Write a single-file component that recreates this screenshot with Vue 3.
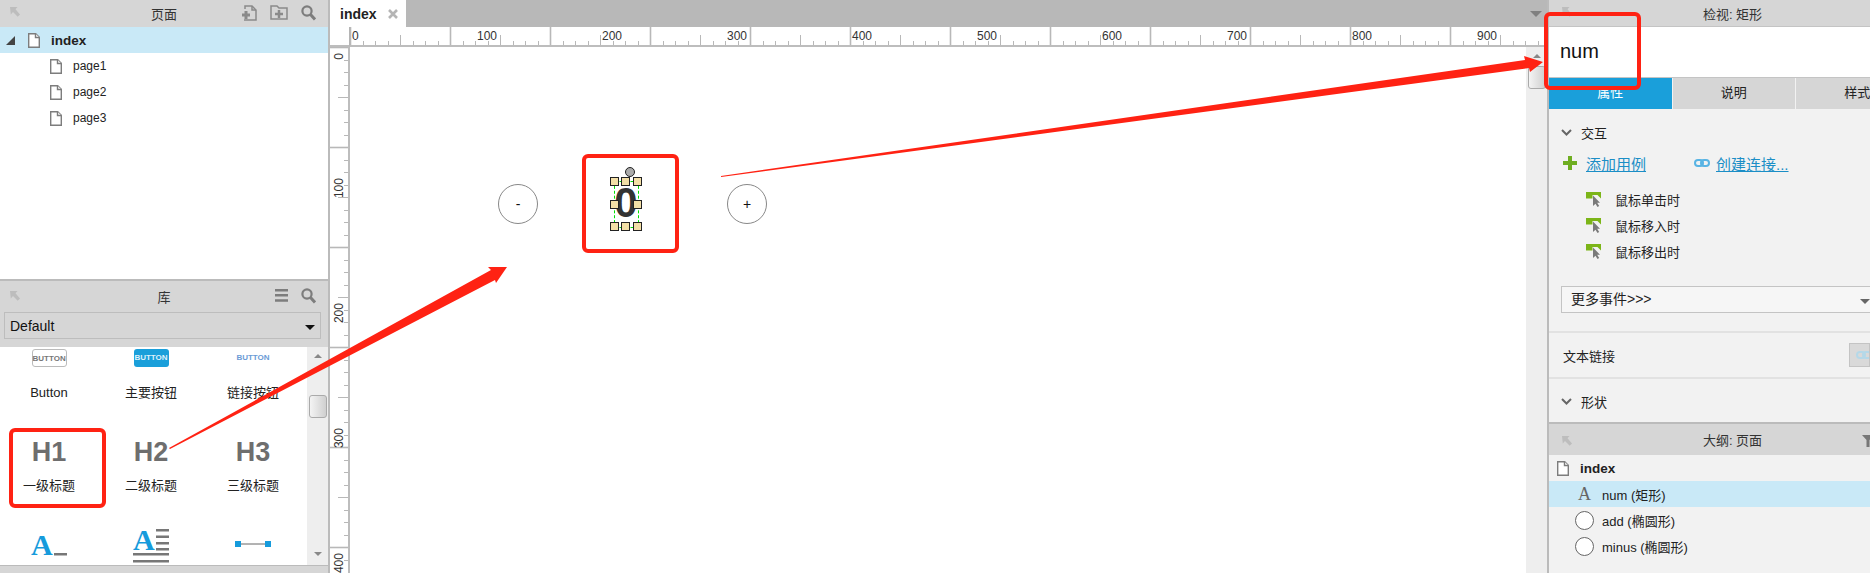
<template>
  <div class="app">
    <aside class="left">
      <section class="pages">
        <header class="bar">
          <svg class="pin" viewBox="0 0 10 10"><path d="M0 0h7.500L5.500 2.200 10 7.500 7.700 9.800 3 5 .8 7.500z" /></svg>
          <span class="bar__title">页面</span>
          <div class="bar__tools">
            <svg width="16" height="16" viewBox="0 0 16 16" fill="none" stroke="#8a8a8a" stroke-width="1.5"><path d="M4 4V1h7l4 4v10H3" /><path d="M11 1v4h4" /><path d="M1 10h8M5 6v8" stroke-width="3" /></svg>
            <svg width="18" height="15" viewBox="0 0 18 15" fill="none" stroke="#8a8a8a" stroke-width="1.5"><path d="M1 14V1h6l2 2h8v11z" /><path d="M5 9h8M9 5v8" stroke-width="2.500" /></svg>
            <svg width="15" height="16" viewBox="0 0 15 16" fill="none" stroke="#7d7d7d"><circle cx="6" cy="6" r="4.600" stroke-width="2.200" /><path d="M9.500 9.500l4.500 5" stroke-width="3" /></svg>
          </div>
        </header>
        <div class="tree-row tree-row--on">
          <span class="tree-tri"></span>
          <svg class="file" viewBox="0 0 12 15"><path d="M.7.7h7l3.600 3.600v10H.7z" /><path d="M7.500.7v3.800h3.800" /></svg>
          <b>index</b>
        </div>
        <div v-for="p in pages" :key="p" class="tree-row tree-row--child">
          <svg class="file" viewBox="0 0 12 15"><path d="M.7.7h7l3.600 3.600v10H.7z" /><path d="M7.500.7v3.800h3.800" /></svg>
          <span>{{ p }}</span>
        </div>
      </section>
      <section class="library">
        <div class="lib-top">
          <header class="bar bar--lib">
            <svg class="pin" viewBox="0 0 10 10"><path d="M0 0h7.500L5.500 2.200 10 7.500 7.700 9.800 3 5 .8 7.500z" /></svg>
            <span class="bar__title">库</span>
            <div class="bar__tools">
              <svg width="13" height="13" viewBox="0 0 13 13" fill="#7d7d7d"><path d="M0 0h13v2.400H0zM0 5h13v2.400H0zM0 10.300h13v2.400H0z" /></svg>
              <svg width="15" height="16" viewBox="0 0 15 16" fill="none" stroke="#7d7d7d"><circle cx="6" cy="6" r="4.600" stroke-width="2.200" /><path d="M9.500 9.500l4.500 5" stroke-width="3" /></svg>
            </div>
          </header>
          <div class="lib-select">
            <span>Default</span>
            <i class="caret"></i>
          </div>
        </div>
        <div class="lib-body">
          <div class="lib-grid">
            <div v-for="w in widgets" :key="w.label" class="widget" :class="w.kind === 'btn' ? 'widget--btn' : 'widget--head'">
              <div class="widget__pic">
                <span v-if="w.kind === 'btn'" class="thumb" :class="w.cls">BUTTON</span>
                <span v-else class="head">{{ w.kind }}</span>
              </div>
              <span class="widget__label">{{ w.label }}</span>
            </div>
            <div class="widget">
              <div class="widget__pic widget__pic--icon widget__pic--title">
                <svg width="36" height="36" viewBox="0 -8 36 36"><text x="0" y="20" class="pic-a">A</text><path d="M23 18h13v2.500H23z" fill="#777" /></svg>
              </div>
            </div>
            <div class="widget">
              <div class="widget__pic widget__pic--icon widget__pic--para">
                <svg width="36" height="42" viewBox="0 -6 36 42"><text x="0" y="22" class="pic-a">A</text><path d="M23 1h13v2.500H23zM23 7.500h13V10H23zM23 14h13v2.500H23zM23 20h13v2.500H23zM0 25h36v2.500H0zM0 32h36v2.500H0z" fill="#777" /></svg>
              </div>
            </div>
            <div class="widget">
              <div class="widget__pic widget__pic--icon widget__pic--line">
                <svg width="36" height="8" viewBox="0 0 36 8"><path d="M4 4h28" stroke="#666" /><path d="M0 1h6v6H0zM30 1h6v6h-6z" fill="#169bdc" /></svg>
              </div>
            </div>
          </div>
          <div class="vscroll">
            <i class="vscroll__up"></i>
            <i class="vscroll__thumb"></i>
            <i class="vscroll__down"></i>
          </div>
        </div>
        <div class="lib-foot"></div>
      </section>
    </aside>

    <main class="center">
      <div class="tabs">
        <div class="tab">
          <b>index</b>
          <svg width="10" height="10" viewBox="0 0 10 10" stroke="#b5b5b5" stroke-width="2.600"><path d="M1 1l8 8M9 1l-8 8" /></svg>
        </div>
        <i class="tabs__menu"></i>
      </div>
      <div class="stage">
        <div class="corner"></div>
        <svg class="hruler" width="1197" height="20">
          <path v-for="t in hTicks" :key="t.x" :d="`M${t.x} 19V${t.top}`" :stroke-width="t.w" stroke="#b8b8b8" fill="none" />
          <path d="M0 19H1197" stroke="#bdbdbd" stroke-width="2" />
          <text v-for="l in hLabels" :key="l.v" :x="l.x + 2" y="13" class="rtext">{{ l.v }}</text>
        </svg>
        <svg class="vruler" width="20" height="526">
          <path v-for="t in vTicks" :key="t.y" :d="`M19 ${t.y}H${t.left}`" :stroke-width="t.w" stroke="#b8b8b8" fill="none" />
          <path d="M19 0V526" stroke="#bdbdbd" stroke-width="2" />
          <text v-for="l in vLabels" :key="l.v" :transform="`translate(13 ${l.y + 6 + l.w}) rotate(-90)`" class="rtext">{{ l.v }}</text>
        </svg>
        <div class="canvas">
          <div class="ball ball--minus">-</div>
          <div class="ball ball--plus">+</div>
          <div class="num">0</div>
          <div class="sel"></div>
          <i class="rot"></i>
          <i v-for="h in handles" :key="h.k" class="grip" :style="{ left: h.x + 'px', top: h.y + 'px' }"></i>
          <div class="vscroll vscroll--canvas">
            <i class="vscroll__up"></i>
            <i class="vscroll__thumb"></i>
          </div>
        </div>
      </div>
    </main>

    <aside class="right">
      <header class="bar bar--right">
        <svg class="pin" viewBox="0 0 10 10"><path d="M0 0h7.500L5.500 2.200 10 7.500 7.700 9.800 3 5 .8 7.500z" /></svg>
        <span class="bar__title">检视: 矩形</span>
      </header>
      <div class="name">num</div>
      <div class="rtabs">
        <span class="rtab rtab--on">属性</span>
        <span class="rtab">说明</span>
        <span class="rtab">样式</span>
      </div>
      <div class="props">
        <div class="sec-title">
          <svg width="11" height="7" viewBox="0 0 11 7" fill="none" stroke="#666" stroke-width="2"><path d="M1 1l4.500 4.500L10 1" /></svg>
          <span>交互</span>
        </div>
        <div class="links">
          <svg width="14" height="14" viewBox="0 0 14 14" fill="#6fae21"><path d="M5 0h4v5h5v4H9v5H5V9H0V5h5z" /></svg>
          <a class="lnk">添加用例</a>
          <svg class="chain" width="16" height="8" viewBox="0 0 16 8" fill="none" stroke="#59b4e4" stroke-width="2"><rect x="1" y="1" width="8" height="6" rx="3" /><rect x="7" y="1" width="8" height="6" rx="3" /></svg>
          <a class="lnk lnk--chain">创建连接...</a>
        </div>
        <ul class="events">
          <li v-for="e in events" :key="e">
            <svg width="15" height="15" viewBox="0 0 15 15"><path d="M0 0h15v6.500L11.500 3H6.500v3.500H0z" fill="#7cb518" /><path d="M7 3.500V14l2.500-2.300 2 3.300 1.700-1-2-3.300H14z" fill="#7a7a7a" /></svg>
            <span>{{ e }}</span>
          </li>
        </ul>
        <div class="more">更多事件&gt;&gt;&gt;<i class="caret caret--grey"></i></div>
        <div class="textlink">
          <span>文本链接</span>
          <div class="tl-btn">
            <svg width="16" height="8" viewBox="0 0 16 8" fill="none" stroke="#b5d8e8" stroke-width="2"><rect x="1" y="1" width="8" height="6" rx="3" /><rect x="7" y="1" width="8" height="6" rx="3" /></svg>
          </div>
        </div>
        <div class="sec-title sec-title--shape">
          <svg width="11" height="7" viewBox="0 0 11 7" fill="none" stroke="#666" stroke-width="2"><path d="M1 1l4.500 4.500L10 1" /></svg>
          <span>形状</span>
        </div>
      </div>
      <section class="outline">
        <header class="bar bar--right bar--outline">
          <svg class="pin" viewBox="0 0 10 10"><path d="M0 0h7.500L5.500 2.200 10 7.500 7.700 9.800 3 5 .8 7.500z" /></svg>
          <span class="bar__title">大纲: 页面</span>
          <svg class="filter" width="12" height="12" viewBox="0 0 12 12" fill="#777"><path d="M0 0h12L7.500 5v7h-3V5z" /></svg>
        </header>
        <div class="o-row o-row--page">
          <svg class="file" viewBox="0 0 12 15"><path d="M.7.7h7l3.600 3.600v10H.7z" /><path d="M7.500.7v3.800h3.800" /></svg>
          <b>index</b>
        </div>
        <div class="o-row o-row--on">
          <span class="o-a">A</span>
          <span>num (矩形)</span>
        </div>
        <div v-for="o in outline" :key="o" class="o-row">
          <i class="o-ball"></i>
          <span>{{ o }}</span>
        </div>
      </section>
    </aside>

    <!-- red annotations drawn on top of the screenshot -->
    <svg class="marks" width="1870" height="573" viewBox="0 0 1870 573">
      <g fill="none" stroke="#ff2213" stroke-width="4">
        <rect x="11" y="430" width="93" height="76" rx="4" />
        <rect x="584" y="156" width="93" height="95" rx="4" />
        <rect x="1546" y="14" width="93" height="74" rx="4" />
      </g>
      <path d="M169 448 L491 270 L488 267 L507 267 L496 283 L495 280 L170 449z" fill="#ff2213" />
      <path d="M721 176 L1525 60 L1524 56 L1543 62 L1530 72 L1529 68 L721 177z" fill="#ff2213" />
    </svg>
  </div>
</template>

<script setup>
const pages = ['page1', 'page2', 'page3']
const events = ['鼠标单击时', '鼠标移入时', '鼠标移出时']
const outline = ['add (椭圆形)', 'minus (椭圆形)']

const widgets = [
  { kind: 'btn', cls: 'thumb--plain', label: 'Button' },
  { kind: 'btn', cls: 'thumb--primary', label: '主要按钮' },
  { kind: 'btn', cls: 'thumb--link', label: '链接按钮' },
  { kind: 'H1', label: '一级标题' },
  { kind: 'H2', label: '二级标题' },
  { kind: 'H3', label: '三级标题' },
]

const STEP = 12.5

const tickSize = (i) => (i % 8 === 0 ? 0 : i % 4 === 0 ? 8 : 14)

const hTicks = []
for (let i = 0; i < 96; i++) {
  hTicks.push({ x: Math.round(i * STEP) + 0.5, top: tickSize(i), w: i % 8 === 0 ? 1.6 : 1 })
}
const hLabels = Array.from({ length: 10 }, (_, i) => ({ v: i * 100, x: i * 125 }))

const vTicks = []
for (let i = 0; i < 42; i++) {
  vTicks.push({ y: Math.round(i * STEP) + 0.5, left: tickSize(i), w: i % 8 === 0 ? 1.6 : 1 })
}
const vLabels = [0, 100, 200, 300, 400].map((v, i) => ({
  v,
  y: i * 125,
  w: String(v).length * 6.7,
}))

const handles = []
for (const y of [130, 153, 175]) {
  for (const x of [260, 271, 283]) {
    if (y === 153 && x === 271) continue
    handles.push({ k: `${x}-${y}`, x, y })
  }
}
</script>

<style>
html, body {
  margin: 0;
  background: #fff;
}
</style>

<style scoped>
.app {
  position: relative;
  display: flex;
  width: 1870px;
  height: 573px;
  overflow: hidden;
  font-family: "Liberation Sans", "Noto Sans CJK SC", sans-serif;
  font-size: 13px;
  color: #222;
}

/* shared panel header */
.bar {
  position: relative;
  display: flex;
  align-items: center;
  justify-content: center;
  flex: none;
  height: 27px;
  background: #d6d6d6;
}
.bar__title {
  font-size: 13px;
  color: #333;
}
.bar__tools {
  position: absolute;
  right: 12px;
  top: -1px;
  height: 100%;
  display: flex;
  align-items: center;
  gap: 13px;
}
.pin {
  position: absolute;
  left: 10px;
  top: 7px;
  width: 10px;
  height: 10px;
  fill: #bdbdbd;
}
.file {
  flex: none;
  width: 12px;
  height: 15px;
  fill: #fff;
  stroke: #7d7d7d;
  stroke-width: 1.4;
}

/* left column */
.left {
  flex: none;
  display: flex;
  flex-direction: column;
  width: 328px;
  border-right: 2px solid #bbb;
}
.pages {
  flex: none;
  height: 279px;
}
.tree-row {
  display: flex;
  align-items: center;
  height: 26px;
  font-size: 12px;
}
.tree-row--on {
  background: #c9e9f7;
  font-size: 13.5px;
  padding-left: 6px;
}
.tree-row--on .file {
  margin-left: 13px;
}
.tree-row--on b {
  margin-left: 11px;
}
.tree-row--child {
  padding-left: 50px;
}
.tree-row--child span {
  margin-left: 11px;
}
.tree-tri {
  width: 0;
  height: 0;
  border-left: 9px solid transparent;
  border-bottom: 9px solid #444;
}
.library {
  flex: 1;
  display: flex;
  flex-direction: column;
  min-height: 0;
  border-top: 2px solid #bbb;
}
.lib-top {
  flex: none;
  padding-bottom: 8px;
  background: #d6d6d6;
}
.bar--lib {
  height: 31px;
}
.bar--lib .pin {
  top: 10px;
}
.lib-select {
  display: flex;
  align-items: center;
  justify-content: space-between;
  height: 27px;
  padding: 0 5px 0 5px;
  border: 1px solid #bdbdbd;
  margin: 0 7px 0 4px;
  box-sizing: border-box;
  font-size: 14px;
  color: #111;
}
.caret {
  width: 0;
  height: 0;
  margin-top: 3px;
  border: 5px solid transparent;
  border-bottom: 0;
  border-top: 5px solid #111;
}
.lib-body {
  flex: 1;
  display: flex;
  min-height: 0;
}
.lib-grid {
  flex: 1;
  display: grid;
  grid-template-columns: repeat(3, 102px);
  grid-auto-rows: 94px;
  margin-left: -2px;
  overflow: hidden;
}
.widget {
  display: flex;
  flex-direction: column;
  align-items: center;
  min-width: 0;
}
.widget__pic {
  display: flex;
  align-items: center;
  justify-content: center;
  height: 22px;
}
.widget--head .widget__pic {
  height: 30px;
  margin-top: -4px;
}
.widget__pic--icon {
  align-items: flex-start;
  height: auto;
}
.widget__pic--title {
  margin-top: -8px;
}
.widget__pic--para {
  margin-top: -13px;
}
.widget__pic--line {
  margin-top: 5px;
}
.widget__label {
  margin-top: 15px;
  font-size: 13px;
  line-height: 18px;
  color: #222;
}
.widget--head .widget__label {
  margin-top: 10px;
}
.thumb {
  display: block;
  box-sizing: border-box;
  width: 35px;
  height: 18px;
  border-radius: 3px;
  font-size: 8px;
  font-weight: 700;
  line-height: 17px;
  text-align: center;
  white-space: nowrap;
}
.thumb--plain {
  border: 1px solid #bbb;
  color: #777;
}
.thumb--primary {
  background: #1a9fda;
  color: #dff1fa;
}
.thumb--link {
  color: #6b9bd6;
}
.head {
  font-size: 27px;
  font-weight: 700;
  line-height: 30px;
  color: #6e6e6e;
}
.pic-a {
  font-family: "Liberation Serif", serif;
  font-size: 30px;
  font-weight: 700;
  fill: #169bdc;
}
.lib-foot {
  flex: none;
  height: 8px;
  background: #d6d6d6;
  border-top: 1px solid #bbb;
  box-sizing: border-box;
}

/* scrollbars */
.vscroll {
  position: relative;
  flex: none;
  width: 21px;
  background: #eee;
}
.vscroll__up,
.vscroll__down {
  position: absolute;
  left: 7px;
  width: 0;
  height: 0;
  border: 4px solid transparent;
}
.vscroll__up {
  top: 7px;
  border-top: 0;
  border-bottom: 4px solid #888;
}
.vscroll__down {
  bottom: 9px;
  border-bottom: 0;
  border-top: 4px solid #888;
}
.vscroll__thumb {
  position: absolute;
  left: 2px;
  top: 48px;
  width: 18px;
  height: 23px;
  box-sizing: border-box;
  border: 1px solid #aaa;
  border-radius: 3px;
  background: linear-gradient(90deg, #f4f4f4, #cfcfcf);
}

/* canvas column */
.center {
  flex: 1;
  display: flex;
  flex-direction: column;
  min-width: 0;
}
.tabs {
  position: relative;
  flex: none;
  display: flex;
  height: 27px;
  background: #b8b8b8;
}
.tab {
  display: flex;
  align-items: center;
  gap: 11px;
  width: 76px;
  padding-left: 10px;
  box-sizing: border-box;
  background: #fff;
  font-size: 14px;
}
.tabs__menu {
  position: absolute;
  right: 5px;
  top: 11px;
  width: 0;
  height: 0;
  border: 6px solid transparent;
  border-bottom: 0;
  border-top: 6px solid #808080;
}
.stage {
  flex: 1;
  display: grid;
  grid-template-columns: 20px 1fr;
  grid-template-rows: 20px 1fr;
  min-height: 0;
}
.corner {
  background: #fff;
  border-right: 1px solid #b4b4b4;
  border-bottom: 2px solid #bdbdbd;
  box-sizing: border-box;
}
.hruler,
.vruler {
  display: block;
  background: #fff;
}
.rtext {
  font-size: 12px;
  fill: #333;
}
.canvas {
  position: relative;
  min-width: 0;
  min-height: 0;
  background: #fff;
}
.vscroll--canvas {
  position: absolute;
  top: 0;
  right: 0;
  bottom: 0;
}
.vscroll--canvas .vscroll__thumb {
  left: 2px;
  top: 19px;
}

/* widgets on the page */
.ball {
  position: absolute;
  top: 137px;
  display: flex;
  align-items: center;
  justify-content: center;
  box-sizing: border-box;
  width: 40px;
  height: 40px;
  border: 1px solid #888;
  border-radius: 50%;
  font-size: 14px;
  color: #111;
}
.ball--minus {
  left: 148px;
}
.ball--plus {
  left: 377px;
}
.num {
  position: absolute;
  left: 246px;
  top: 132px;
  width: 60px;
  height: 48px;
  font-size: 42px;
  font-weight: 700;
  line-height: 48px;
  text-align: center;
  color: #333;
}
.sel {
  position: absolute;
  left: 264px;
  top: 134px;
  width: 23px;
  height: 45px;
  border: 1px dashed #00e000;
}
.rot {
  position: absolute;
  left: 275px;
  top: 120px;
  box-sizing: border-box;
  width: 10px;
  height: 10px;
  border: 1px solid #222;
  border-radius: 50%;
  background: #aaa;
}
.grip {
  position: absolute;
  box-sizing: border-box;
  width: 9px;
  height: 9px;
  border: 1.5px solid #222;
  background: #f3dfa6;
}

/* right column */
.right {
  flex: none;
  display: flex;
  flex-direction: column;
  width: 323px;
  box-sizing: border-box;
  border-left: 2px solid #bbb;
  background: #f2f2f2;
  overflow: hidden;
}
.bar--right {
  border-bottom: 1px solid #c4c4c4;
  box-sizing: border-box;
  padding-left: 46px;
  justify-content: center;
}
.bar--right .pin {
  left: 13px;
}
.name {
  flex: none;
  height: 50px;
  padding-left: 11px;
  box-sizing: border-box;
  background: #fff;
  font-size: 20px;
  line-height: 49px;
  color: #111;
}
.rtabs {
  flex: none;
  display: flex;
  gap: 1px;
  width: 380px;
  height: 32px;
  border-top: 1px solid #c4c4c4;
  box-sizing: border-box;
}
.rtab {
  flex: none;
  width: 122.5px;
  background: #d6d6d6;
  font-size: 13px;
  line-height: 30px;
  text-align: center;
  color: #222;
}
.rtab--on {
  background: #1a9fda;
  color: #fff;
}
.props {
  flex: none;
  height: 313px;
  box-sizing: border-box;
  padding-top: 12px;
}
.sec-title {
  display: flex;
  align-items: center;
  gap: 9px;
  height: 22px;
  padding-left: 12px;
  font-size: 13px;
}
.sec-title--shape {
  height: 44px;
}
.links {
  display: flex;
  align-items: center;
  height: 22px;
  margin-top: 9px;
  padding-left: 14px;
  font-size: 15px;
}
.lnk {
  margin-left: 9px;
  color: #1b8ec6;
  text-decoration: underline;
}
.lnk--chain {
  margin-left: 6px;
}
.chain {
  margin-left: 48px;
}
.events {
  margin: 12px 0 0;
  padding: 0 0 0 37px;
  list-style: none;
}
.events li {
  display: flex;
  align-items: center;
  gap: 14px;
  height: 26px;
  font-size: 13px;
}
.more {
  position: relative;
  box-sizing: border-box;
  width: 320px;
  height: 27px;
  margin: 22px 0 0 12px;
  padding-left: 9px;
  border: 1px solid #c4c4c4;
  background: #f6f6f6;
  font-size: 14px;
  line-height: 24px;
}
.caret--grey {
  position: absolute;
  left: 298px;
  top: 9px;
  border-top-color: #666;
}
.textlink {
  display: flex;
  align-items: center;
  justify-content: space-between;
  height: 48px;
  margin-top: 18px;
  padding: 0 0 0 14px;
  border-top: 2px solid #e2e2e2;
  border-bottom: 2px solid #e2e2e2;
  box-sizing: border-box;
  font-size: 13px;
}
.tl-btn {
  display: flex;
  align-items: center;
  width: 21px;
  height: 24px;
  padding-left: 6px;
  box-sizing: border-box;
  border: 1px solid #c4c4c4;
  background: #d9d9d9;
  overflow: hidden;
}
.tl-btn svg {
  flex: none;
}
.outline {
  flex: 1;
  border-top: 2px solid #bbb;
}
.bar--outline {
  height: 31px;
  border-bottom: 0;
}
.bar--outline .pin {
  top: 12px;
}
.filter {
  position: absolute;
  right: -4px;
  top: 11px;
}
.o-row {
  display: flex;
  align-items: center;
  height: 26px;
  padding-left: 26px;
  gap: 8px;
  font-size: 13px;
}
.o-row--page {
  padding-left: 8px;
  gap: 11px;
  font-size: 13.5px;
}
.o-row--on {
  background: #c9e9f7;
}
.o-a {
  width: 16px;
  margin-left: 3px;
  font-family: "Liberation Serif", serif;
  font-size: 18px;
  color: #666;
}
.o-ball {
  flex: none;
  box-sizing: border-box;
  width: 19px;
  height: 19px;
  border: 1px solid #666;
  border-radius: 50%;
  background: #fff;
}

.marks {
  position: absolute;
  left: 0;
  top: 0;
  pointer-events: none;
}
</style>
